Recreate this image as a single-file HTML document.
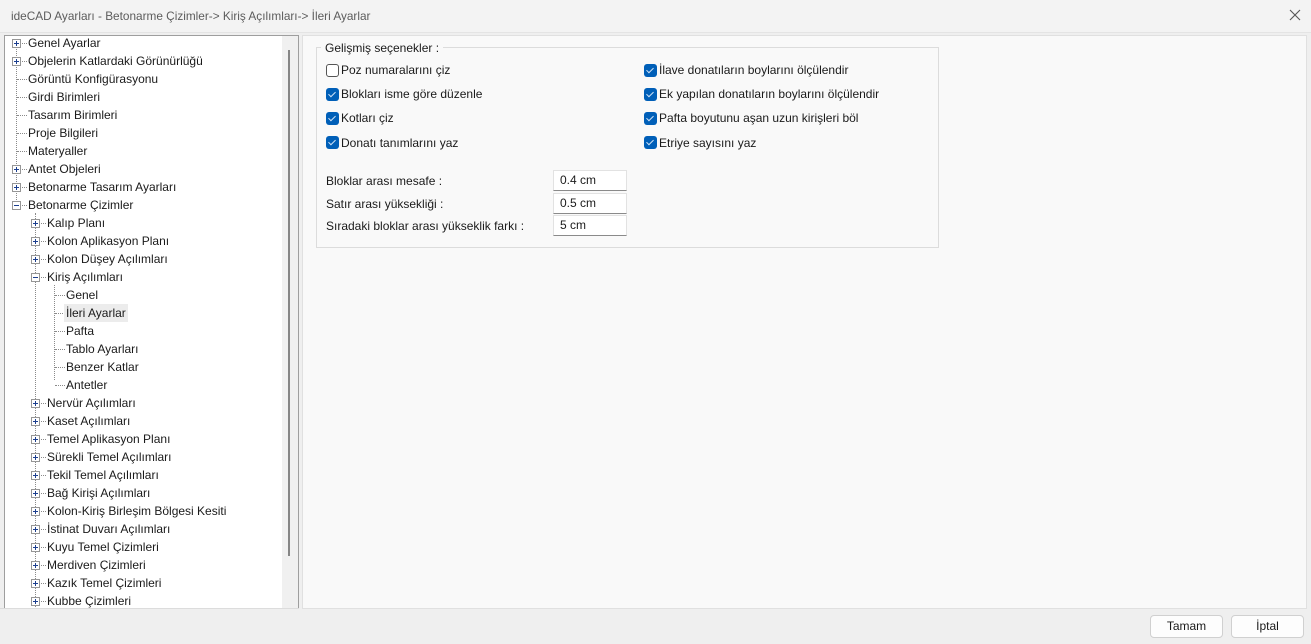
<!DOCTYPE html>
<html><head><meta charset="utf-8"><style>
*{margin:0;padding:0;box-sizing:border-box}
body{width:1311px;height:644px;background:#efefef;font-family:"Liberation Sans",sans-serif;font-size:12px;color:#1a1a1a;position:relative;overflow:hidden}
.a{position:absolute;white-space:nowrap}
#title{left:0;top:0;width:1311px;height:33px;background:#f3f3f3;border-bottom:1px solid #e4e4e4}
#title span{position:absolute;left:11px;top:9px;font-size:11.8px;color:#5c5c5c}
#tree{left:4px;top:35px;width:295px;height:574px;background:#fff;border:1px solid #9e9e9e;overflow:hidden}
#sb{left:282px;top:36px;width:16px;height:572px;background:#f0f0f0}
#thumb{left:288px;top:50px;width:2px;height:506px;background:#858585}
#right{left:302px;top:35px;width:1005px;height:574px;background:#f9f9f9;border:1px solid #e0e0e0}
.r{position:absolute;height:18px;line-height:18px;white-space:nowrap}
.r span{white-space:nowrap}
.ex{position:absolute;width:9px;height:9px;border:1px solid #969696;background:#fff}
.ex:before{content:"";position:absolute;left:1px;top:3px;width:5px;height:1px;background:#1c3f8f}
.ex.p:after{content:"";position:absolute;left:3px;top:1px;width:1px;height:5px;background:#1c3f8f}
.vl{position:absolute;border-left:1px dotted #8a8a8a;width:0}
.hl{position:absolute;border-top:1px dotted #8a8a8a;height:0}
.cb{position:absolute;width:13px;height:13px;border-radius:3px;background:#005fb8}
.cb:after{content:"";position:absolute;left:4px;top:2px;width:3px;height:6px;border:solid #cfe3f7;border-width:0 1px 1px 0;transform:rotate(45deg)}
.cb.u{background:#fff;border:1px solid #555}
.cb.u:after{display:none}
.inp{position:absolute;width:74px;height:21px;background:#fff;border:1px solid #e2e2e2;border-bottom:1px solid #8a8a8a;padding-left:6px;line-height:19px}
.btn{position:absolute;width:73px;height:23px;background:#fdfdfd;border:1px solid #d0d0d0;border-radius:4px;text-align:center;line-height:21px}
</style></head><body>
<div id="title" class="a"><span>ideCAD Ayarları - Betonarme Çizimler-&gt; Kiriş Açılımları-&gt; İleri Ayarlar</span>
<svg class="a" style="left:1289px;top:9px" width="12" height="12"><path d="M1 1L11 11M11 1L1 11" stroke="#555" stroke-width="1.1"/></svg></div>

<div id="tree" class="a">
<div class="vl" style="left:11px;top:8px;height:162px"></div>
<div class="vl" style="left:30px;top:177px;height:400px"></div>
<div class="vl" style="left:49px;top:249px;height:95px"></div>
</div>
<div id="sb" class="a"></div><div id="thumb" class="a"></div>

<div id="right" class="a"></div>
<div class="a" style="left:316px;top:47px;width:623px;height:201px;border:1px solid #dcdcdc"></div>
<div class="a" style="left:321px;top:41px;padding:0 4px;background:#f9f9f9">Gelişmiş seçenekler :</div>

<div class="cb u" style="left:326px;top:64px"></div><div class="a" style="left:341px;top:63px">Poz numaralarını çiz</div>
<div class="cb" style="left:326px;top:88px"></div><div class="a" style="left:341px;top:87px">Blokları isme göre düzenle</div>
<div class="cb" style="left:326px;top:112px"></div><div class="a" style="left:341px;top:111px">Kotları çiz</div>
<div class="cb" style="left:326px;top:136px"></div><div class="a" style="left:341px;top:136px">Donatı tanımlarını yaz</div>
<div class="cb" style="left:644px;top:64px"></div><div class="a" style="left:659px;top:63px">İlave donatıların boylarını ölçülendir</div>
<div class="cb" style="left:644px;top:88px"></div><div class="a" style="left:659px;top:87px">Ek yapılan donatıların boylarını ölçülendir</div>
<div class="cb" style="left:644px;top:112px"></div><div class="a" style="left:659px;top:111px">Pafta boyutunu aşan uzun kirişleri böl</div>
<div class="cb" style="left:644px;top:136px"></div><div class="a" style="left:659px;top:136px">Etriye sayısını yaz</div>

<div class="a" style="left:326px;top:174px">Bloklar arası mesafe :</div>
<div class="a" style="left:326px;top:197px">Satır arası yüksekliği :</div>
<div class="a" style="left:326px;top:219px">Sıradaki bloklar arası yükseklik farkı :</div>
<div class="inp" style="left:553px;top:170px">0.4 cm</div>
<div class="inp" style="left:553px;top:193px">0.5 cm</div>
<div class="inp" style="left:553px;top:215px">5 cm</div>

<div class="btn" style="left:1150px;top:615px">Tamam</div>
<div class="btn" style="left:1231px;top:615px">İptal</div>

<div style="position:absolute;left:0;top:0">
<div class="r" style="left:12px;top:34px"><div class="ex p" style="left:0;top:5px"></div><div class="hl" style="left:10px;top:9px;width:5px"></div><span style="position:absolute;left:16px">Genel Ayarlar</span></div>
<div class="r" style="left:12px;top:52px"><div class="ex p" style="left:0;top:5px"></div><div class="hl" style="left:10px;top:9px;width:5px"></div><span style="position:absolute;left:16px">Objelerin Katlardaki Görünürlüğü</span></div>
<div class="r" style="left:12px;top:70px"><div class="hl" style="left:5px;top:9px;width:10px"></div><span style="position:absolute;left:16px">Görüntü Konfigürasyonu</span></div>
<div class="r" style="left:12px;top:88px"><div class="hl" style="left:5px;top:9px;width:10px"></div><span style="position:absolute;left:16px">Girdi Birimleri</span></div>
<div class="r" style="left:12px;top:106px"><div class="hl" style="left:5px;top:9px;width:10px"></div><span style="position:absolute;left:16px">Tasarım Birimleri</span></div>
<div class="r" style="left:12px;top:124px"><div class="hl" style="left:5px;top:9px;width:10px"></div><span style="position:absolute;left:16px">Proje Bilgileri</span></div>
<div class="r" style="left:12px;top:142px"><div class="hl" style="left:5px;top:9px;width:10px"></div><span style="position:absolute;left:16px">Materyaller</span></div>
<div class="r" style="left:12px;top:160px"><div class="ex p" style="left:0;top:5px"></div><div class="hl" style="left:10px;top:9px;width:5px"></div><span style="position:absolute;left:16px">Antet Objeleri</span></div>
<div class="r" style="left:12px;top:178px"><div class="ex p" style="left:0;top:5px"></div><div class="hl" style="left:10px;top:9px;width:5px"></div><span style="position:absolute;left:16px">Betonarme Tasarım Ayarları</span></div>
<div class="r" style="left:12px;top:196px"><div class="ex" style="left:0;top:5px"></div><div class="hl" style="left:10px;top:9px;width:5px"></div><span style="position:absolute;left:16px">Betonarme Çizimler</span></div>

<div class="r" style="left:31px;top:214px"><div class="ex p" style="left:0;top:5px"></div><div class="hl" style="left:10px;top:9px;width:5px"></div><span style="position:absolute;left:16px">Kalıp Planı</span></div>
<div class="r" style="left:31px;top:232px"><div class="ex p" style="left:0;top:5px"></div><div class="hl" style="left:10px;top:9px;width:5px"></div><span style="position:absolute;left:16px">Kolon Aplikasyon Planı</span></div>
<div class="r" style="left:31px;top:250px"><div class="ex p" style="left:0;top:5px"></div><div class="hl" style="left:10px;top:9px;width:5px"></div><span style="position:absolute;left:16px">Kolon Düşey Açılımları</span></div>
<div class="r" style="left:31px;top:268px"><div class="ex" style="left:0;top:5px"></div><div class="hl" style="left:10px;top:9px;width:5px"></div><span style="position:absolute;left:16px">Kiriş Açılımları</span></div>

<div class="r" style="left:50px;top:286px"><div class="hl" style="left:5px;top:9px;width:10px"></div><span style="position:absolute;left:16px">Genel</span></div>
<div class="r" style="left:50px;top:304px"><div class="hl" style="left:5px;top:9px;width:10px"></div><span style="position:absolute;left:14px;padding:0 2px;background:#ececec">İleri Ayarlar</span></div>
<div class="r" style="left:50px;top:322px"><div class="hl" style="left:5px;top:9px;width:10px"></div><span style="position:absolute;left:16px">Pafta</span></div>
<div class="r" style="left:50px;top:340px"><div class="hl" style="left:5px;top:9px;width:10px"></div><span style="position:absolute;left:16px">Tablo Ayarları</span></div>
<div class="r" style="left:50px;top:358px"><div class="hl" style="left:5px;top:9px;width:10px"></div><span style="position:absolute;left:16px">Benzer Katlar</span></div>
<div class="r" style="left:50px;top:376px"><div class="hl" style="left:5px;top:9px;width:10px"></div><span style="position:absolute;left:16px">Antetler</span></div>

<div class="r" style="left:31px;top:394px"><div class="ex p" style="left:0;top:5px"></div><div class="hl" style="left:10px;top:9px;width:5px"></div><span style="position:absolute;left:16px">Nervür Açılımları</span></div>
<div class="r" style="left:31px;top:412px"><div class="ex p" style="left:0;top:5px"></div><div class="hl" style="left:10px;top:9px;width:5px"></div><span style="position:absolute;left:16px">Kaset Açılımları</span></div>
<div class="r" style="left:31px;top:430px"><div class="ex p" style="left:0;top:5px"></div><div class="hl" style="left:10px;top:9px;width:5px"></div><span style="position:absolute;left:16px">Temel Aplikasyon Planı</span></div>
<div class="r" style="left:31px;top:448px"><div class="ex p" style="left:0;top:5px"></div><div class="hl" style="left:10px;top:9px;width:5px"></div><span style="position:absolute;left:16px">Sürekli Temel Açılımları</span></div>
<div class="r" style="left:31px;top:466px"><div class="ex p" style="left:0;top:5px"></div><div class="hl" style="left:10px;top:9px;width:5px"></div><span style="position:absolute;left:16px">Tekil Temel Açılımları</span></div>
<div class="r" style="left:31px;top:484px"><div class="ex p" style="left:0;top:5px"></div><div class="hl" style="left:10px;top:9px;width:5px"></div><span style="position:absolute;left:16px">Bağ Kirişi Açılımları</span></div>
<div class="r" style="left:31px;top:502px"><div class="ex p" style="left:0;top:5px"></div><div class="hl" style="left:10px;top:9px;width:5px"></div><span style="position:absolute;left:16px">Kolon&#8209;Kiriş Birleşim Bölgesi Kesiti</span></div>
<div class="r" style="left:31px;top:520px"><div class="ex p" style="left:0;top:5px"></div><div class="hl" style="left:10px;top:9px;width:5px"></div><span style="position:absolute;left:16px">İstinat Duvarı Açılımları</span></div>
<div class="r" style="left:31px;top:538px"><div class="ex p" style="left:0;top:5px"></div><div class="hl" style="left:10px;top:9px;width:5px"></div><span style="position:absolute;left:16px">Kuyu Temel Çizimleri</span></div>
<div class="r" style="left:31px;top:556px"><div class="ex p" style="left:0;top:5px"></div><div class="hl" style="left:10px;top:9px;width:5px"></div><span style="position:absolute;left:16px">Merdiven Çizimleri</span></div>
<div class="r" style="left:31px;top:574px"><div class="ex p" style="left:0;top:5px"></div><div class="hl" style="left:10px;top:9px;width:5px"></div><span style="position:absolute;left:16px">Kazık Temel Çizimleri</span></div>
<div class="r" style="left:31px;top:592px"><div class="ex p" style="left:0;top:5px"></div><div class="hl" style="left:10px;top:9px;width:5px"></div><span style="position:absolute;left:16px">Kubbe Çizimleri</span></div>
</div>
<div class="a" style="left:0;top:608px;width:300px;height:36px;background:#efefef"></div>
<div class="a" style="left:0;top:608px;width:299px;height:1px;background:#dcdcdc"></div>
</body></html>
